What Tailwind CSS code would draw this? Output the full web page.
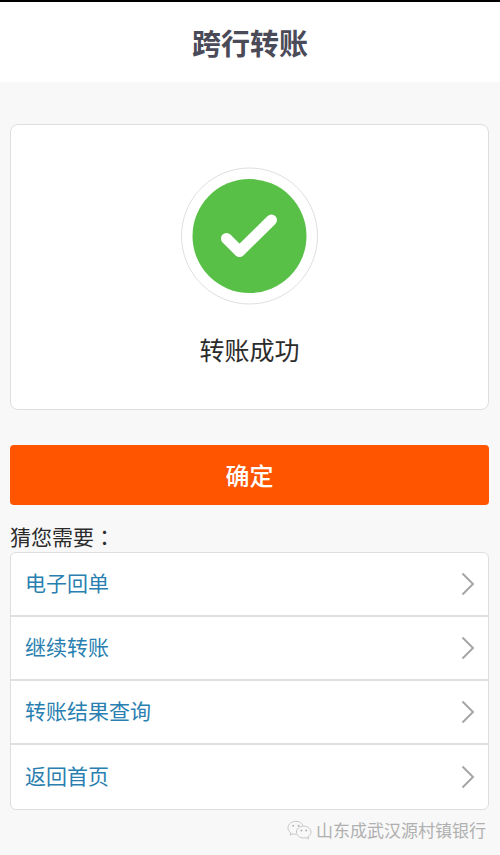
<!DOCTYPE html>
<html lang="zh-CN">
<head>
<meta charset="utf-8">
<meta name="viewport" content="width=device-width, initial-scale=1">
<title>跨行转账</title>
<script src="https://cdn.jsdelivr.net/npm/@tailwindcss/browser@4"></script>
</head>
<body class="min-h-screen bg-[#f8f8f8] font-['Noto_Sans_CJK_SC',sans-serif] text-[#2b2b2b]">
<header class="flex h-[82px] items-center justify-center border-t-2 border-black bg-white">
  <h1 class="text-[29px] leading-10 font-bold text-[#4a4a58]">跨行转账</h1>
</header>
<main class="pt-[42px] pr-[11px] pl-[10px]">
  <section class="flex flex-col items-center rounded-lg border border-[#dedede] bg-white pt-[42px] pb-[42px]">
    <svg class="size-[138px]" viewBox="0 0 138 138" fill="none" aria-hidden="true">
      <circle cx="68.500" cy="69" r="68" stroke="#dfdfdf"/>
      <circle cx="68.500" cy="69" r="57" fill="#58c047"/>
      <path d="M45.500 71.500L58.500 84.500L90.500 53" stroke="#fff" stroke-width="11" stroke-linecap="round" stroke-linejoin="round"/>
    </svg>
    <p class="mt-[26px] text-[25px] leading-9">转账成功</p>
  </section>
  <button type="button" class="mt-[35px] block h-[60px] w-full rounded bg-[#ff5500] text-2xl font-medium text-white">确定</button>
  <h2 class="mt-[15px] text-[21px] leading-8">猜您需要<span class="font-['Noto_Sans_CJK_TC',sans-serif]" lang="zh-TW">：</span></h2>
  <nav aria-label="猜您需要" class="divide-y-2 divide-[#e0e0e0] overflow-hidden rounded-md border border-[#dedede] bg-white text-[21px] leading-8 text-[#2a7fb0]">
    <a href="#" class="flex h-16 items-center justify-between pr-[13px] pl-[14px]"><span class="pb-1">电子回单</span>
      <svg class="h-6 w-[14px]" viewBox="0 0 14 24" fill="none" stroke="#a6a6a6" stroke-width="2" aria-hidden="true"><path d="M1.500 1.500L12 12L1.500 22.500"/></svg></a>
    <a href="#" class="flex h-16 items-center justify-between pr-[13px] pl-[14px]"><span class="pb-1">继续转账</span>
      <svg class="h-6 w-[14px]" viewBox="0 0 14 24" fill="none" stroke="#a6a6a6" stroke-width="2" aria-hidden="true"><path d="M1.500 1.500L12 12L1.500 22.500"/></svg></a>
    <a href="#" class="flex h-16 items-center justify-between pr-[13px] pl-[14px]"><span class="pb-1">转账结果查询</span>
      <svg class="h-6 w-[14px]" viewBox="0 0 14 24" fill="none" stroke="#a6a6a6" stroke-width="2" aria-hidden="true"><path d="M1.500 1.500L12 12L1.500 22.500"/></svg></a>
    <a href="#" class="flex h-16 items-center justify-between pr-[13px] pl-[14px]"><span class="pb-1">返回首页</span>
      <svg class="h-6 w-[14px]" viewBox="0 0 14 24" fill="none" stroke="#a6a6a6" stroke-width="2" aria-hidden="true"><path d="M1.500 1.500L12 12L1.500 22.500"/></svg></a>
  </nav>
</main>
<footer class="flex items-center justify-end gap-1 pt-2 pr-[14px] text-[17px] leading-6 text-[#b0b0b0]">
  <svg class="h-5 w-[25px]" viewBox="0 0 26 20" fill="none" stroke="#c4c4c4" aria-hidden="true">
    <path d="M16.500 5.500C15.500 2.500 12.800 1 9.500 1C4.800 1 1 4 1 7.700C1 9.800 2.200 11.700 4 12.900L3.200 15.300L6.200 13.900C7.200 14.200 8.200 14.400 9.300 14.400"/>
    <path d="M17.300 6C13 6 9.800 8.800 9.800 12.200C9.800 15.600 13 18.300 17.300 18.300C18.200 18.300 19 18.200 19.800 17.900L22.500 19.200L21.800 17C23.800 15.900 25 14.200 25 12.200C25 8.800 21.600 6 17.300 6Z"/>
    <g fill="#b0b0b0" stroke="none"><circle cx="6.500" cy="5.500" r="1"/><circle cx="12" cy="5.500" r="1"/><circle cx="15" cy="10.500" r="1"/><circle cx="20" cy="10.500" r="1"/></g>
  </svg>
  <span>山东成武汉源村镇银行</span>
</footer>
</body>
</html>
